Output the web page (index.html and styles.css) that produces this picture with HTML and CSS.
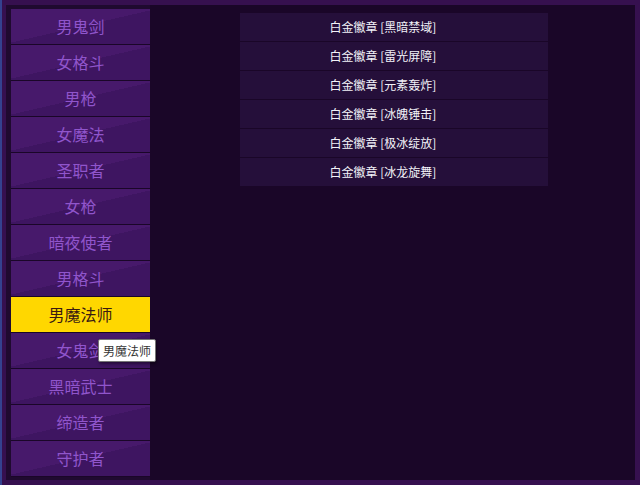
FILE: index.html
```html
<!DOCTYPE html>
<html>
<head>
  <title>职业徽章</title>
  <meta charset="UTF-8">
  <link rel="stylesheet" href="styles.css">
</head>
<body>
  <div class="frame">
    <div class="panel">
      <ul class="job-list">
        <li class="job-item">男鬼剑</li>
        <li class="job-item">女格斗</li>
        <li class="job-item">男枪</li>
        <li class="job-item">女魔法</li>
        <li class="job-item">圣职者</li>
        <li class="job-item">女枪</li>
        <li class="job-item">暗夜使者</li>
        <li class="job-item">男格斗</li>
        <li class="job-item active">男魔法师</li>
        <li class="job-item">女鬼剑</li>
        <li class="job-item">黑暗武士</li>
        <li class="job-item">缔造者</li>
        <li class="job-item">守护者</li>
      </ul>
      <div class="content">
        <ul class="badge-list">
          <li class="badge-row">白金徽章 [黑暗禁域]</li>
          <li class="badge-row">白金徽章 [雷光屏障]</li>
          <li class="badge-row">白金徽章 [元素轰炸]</li>
          <li class="badge-row">白金徽章 [冰魄锤击]</li>
          <li class="badge-row">白金徽章 [极冰绽放]</li>
          <li class="badge-row">白金徽章 [冰龙旋舞]</li>
        </ul>
      </div>
    </div>
  </div>
  <div class="tooltip">男魔法师</div>
</body>
</html>
```

FILE: styles.css
```css
html, body {
  margin: 0;
  padding: 0;
}
body {
  width: 640px;
  height: 485px;
  overflow: hidden;
  background-color: #36104f;
  font-family: "Noto Sans CJK SC", "Noto Sans", sans-serif;
  position: relative;
}
.frame {
  box-sizing: border-box;
  height: 485px;
  border-left: 2px solid #34428f;
  padding: 5px 5px 5px 4px;
}
.panel {
  display: flex;
  height: 475px;
  background-color: #1a0628;
}
ul {
  list-style: none;
  margin: 0;
  padding: 0;
}
.job-list {
  width: 139px;
  padding: 4px 0 0 5px;
  background-color: #1f0a2f;
  flex-shrink: 0;
}
.job-item {
  height: 35px;
  line-height: 35px;
  border-bottom: 1px solid #1a0628;
  text-align: center;
  font-size: 16px;
  color: #9055cc;
  background: linear-gradient(167deg, #47196b 50%, #3e1561 50%);
}
.job-item.active {
  background: #ffd700;
  color: #3a1a12;
}
.content {
  flex-grow: 1;
}
.badge-list {
  width: 308px;
  margin: 8px 0 0 90px;
}
.badge-row {
  height: 28px;
  line-height: 28px;
  padding-right: 22px;
  background-color: #250f3a;
  border-bottom: 1px solid #1a0628;
  text-align: center;
  font-size: 12px;
  color: #f2f2f8;
}
.badge-row:last-child {
  border-bottom: none;
}
.tooltip {
  position: absolute;
  left: 98px;
  top: 339px;
  height: 21px;
  line-height: 21px;
  padding: 0 4px;
  background: #ffffff;
  border: 1px solid #767676;
  border-radius: 2px;
  box-shadow: 1px 2px 3px rgba(0, 0, 0, 0.4);
  font-size: 12px;
  color: #333;
}
```
